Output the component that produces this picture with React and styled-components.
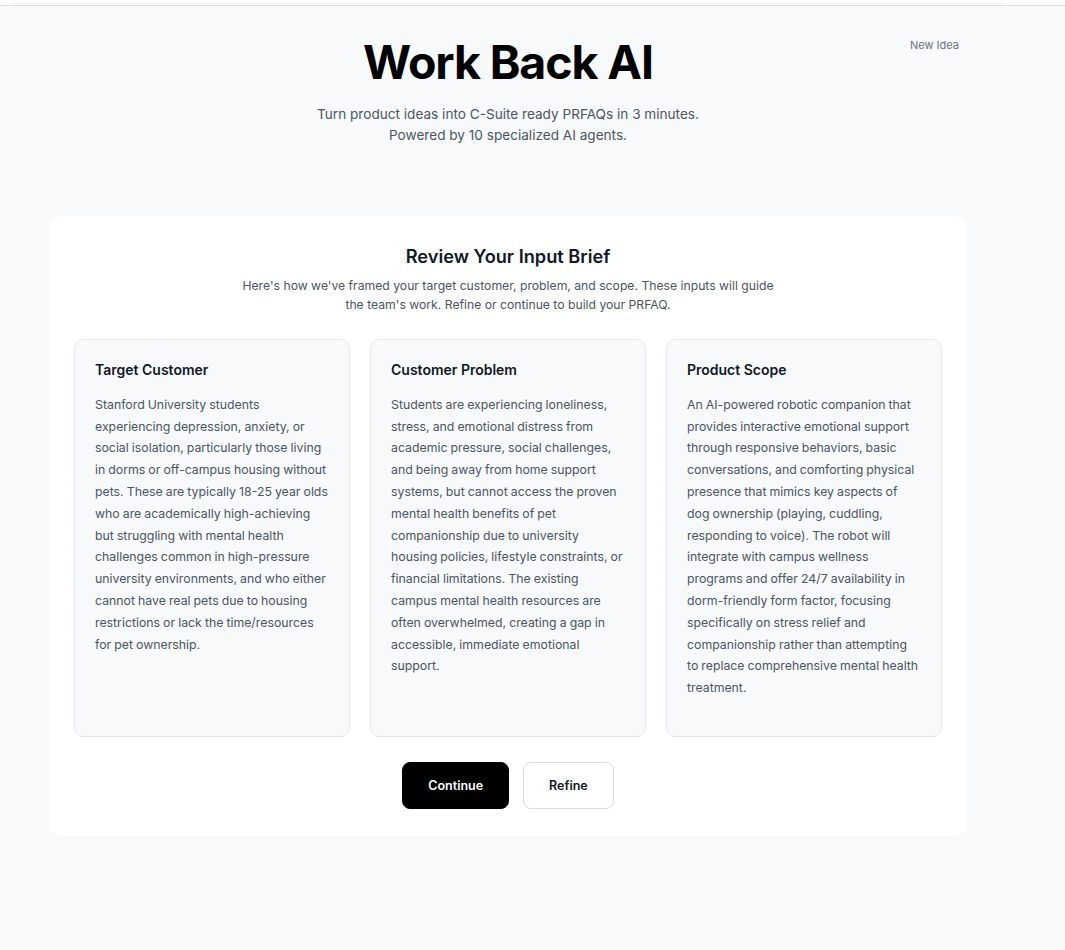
import styled, { createGlobalStyle } from "styled-components";

const GlobalStyle = createGlobalStyle`
  html, body {
    margin: 0;
    padding: 0;
    background: #f8f9fa;
  }
  body {
    font-family: Inter, "Noto Sans", "Liberation Sans", sans-serif;
    -webkit-font-smoothing: antialiased;
  }
`;

const briefs = [
  {
    title: "Target Customer",
    text: "Stanford University students experiencing depression, anxiety, or social isolation, particularly those living in dorms or off-campus housing without pets. These are typically 18-25 year olds who are academically high-achieving but struggling with mental health challenges common in high-pressure university environments, and who either cannot have real pets due to housing restrictions or lack the time/resources for pet ownership.",
  },
  {
    title: "Customer Problem",
    text: "Students are experiencing loneliness, stress, and emotional distress from academic pressure, social challenges, and being away from home support systems, but cannot access the proven mental health benefits of pet companionship due to university housing policies, lifestyle constraints, or financial limitations. The existing campus mental health resources are often overwhelmed, creating a gap in accessible, immediate emotional support.",
  },
  {
    title: "Product Scope",
    // nbsp keeps "to replace" together so the wrap matches the design
    text: "An AI-powered robotic companion that provides interactive emotional support through responsive behaviors, basic conversations, and comforting physical presence that mimics key aspects of dog ownership (playing, cuddling, responding to voice). The robot will integrate with campus wellness programs and offer 24/7 availability in dorm-friendly form factor, focusing specifically on stress relief and companionship rather than attempting to\u00a0replace comprehensive mental health treatment.",
  },
];

const App = () => {
  return (
    <Page>
      <GlobalStyle />
      <TopStrip>
        <TopStripInner />
      </TopStrip>

      <Wrapper>
        <Header>
          <NewIdea>New Idea</NewIdea>
          <Title>Work Back AI</Title>
          <Tagline>
            Turn product ideas into C-Suite ready PRFAQs in 3 minutes.
            <br />
            Powered by 10 specialized AI agents.
          </Tagline>
        </Header>

        <Panel>
          <PanelTitle>Review Your Input Brief</PanelTitle>
          <PanelText>
            Here's how we've framed your target customer, problem, and scope.
            These inputs will guide the team's work. Refine or continue to
            build your PRFAQ.
          </PanelText>

          <BriefGrid>
            {briefs.map((b) => (
              <BriefCard key={b.title}>
                <BriefTitle>{b.title}</BriefTitle>
                <BriefText>{b.text}</BriefText>
              </BriefCard>
            ))}
          </BriefGrid>

          <Actions>
            <ActionButton $primary>Continue</ActionButton>
            <ActionButton>Refine</ActionButton>
          </Actions>
        </Panel>
      </Wrapper>
    </Page>
  );
};

const Page = styled.div`
  min-height: 950px;
  background: #f8f9fa;
`;

// leftover bit of the previous step's bar, cut off at the top
const TopStrip = styled.div`
  height: 5px;
  background: #ffffff;
  border-bottom: 1px solid #dcdee2;
  padding: 0 60px 0 12px;
`;

const TopStripInner = styled.div`
  height: 3px;
  background: #fbfbfc;
  border-bottom: 1px solid #eceef1;
  border-radius: 0 0 3px 3px;
`;

const Wrapper = styled.div`
  width: 918px;
  margin-left: 49px;
`;

const Header = styled.header`
  position: relative;
  text-align: center;
  padding-top: 29px;
`;

const NewIdea = styled.button`
  position: absolute;
  top: 32px;
  right: 8px;
  border: none;
  background: none;
  padding: 0;
  font-family: inherit;
  font-size: 11px;
  color: #6b7280;
  cursor: pointer;
`;

const Title = styled.h1`
  margin: 0;
  font-size: 46.5px;
  font-weight: 700;
  letter-spacing: -1.1px;
  line-height: 1.2;
  color: #000000;
`;

const Tagline = styled.p`
  margin: 13px 0 0;
  font-size: 13.6px;
  line-height: 21px;
  color: #4b5563;
`;

const Panel = styled.section`
  margin-top: 70px;
  background: #ffffff;
  border-radius: 12px;
  padding: 28px 25px 27px;
  text-align: center;
`;

const PanelTitle = styled.h2`
  margin: 0;
  font-size: 18.2px;
  font-weight: 600;
  color: #111827;
  line-height: 24px;
`;

const PanelText = styled.p`
  margin: 8px auto 0;
  max-width: 540px;
  font-size: 12.2px;
  line-height: 19px;
  color: #4b5563;
`;

const BriefGrid = styled.div`
  display: grid;
  grid-template-columns: repeat(3, 1fr);
  gap: 20px;
  margin-top: 25px;
  text-align: left;
`;

const BriefCard = styled.div`
  min-height: 398px;
  box-sizing: border-box;
  background: #f8f9fa;
  border: 1px solid #e5e7eb;
  border-radius: 10px;
  padding: 21px 19px 21px 20px;
`;

const BriefTitle = styled.h3`
  margin: 0;
  font-size: 14px;
  font-weight: 600;
  line-height: 18px;
  color: #111827;
`;

const BriefText = styled.p`
  margin: 15px 0 0;
  font-size: 12.3px;
  line-height: 21.8px;
  word-spacing: -0.4px;
  color: #4b5563;
`;

const Actions = styled.div`
  display: flex;
  justify-content: center;
  gap: 14px;
  margin-top: 25px;
`;

const ActionButton = styled.button`
  height: 47px;
  padding: 0 25px;
  border-radius: 8px;
  font-family: inherit;
  font-size: 12.5px;
  font-weight: 600;
  cursor: pointer;
  color: ${(p) => (p.$primary ? "#ffffff" : "#111827")};
  background: ${(p) => (p.$primary ? "#000000" : "#ffffff")};
  border: 1px solid ${(p) => (p.$primary ? "#000000" : "#d9dde3")};
`;

export default App;
